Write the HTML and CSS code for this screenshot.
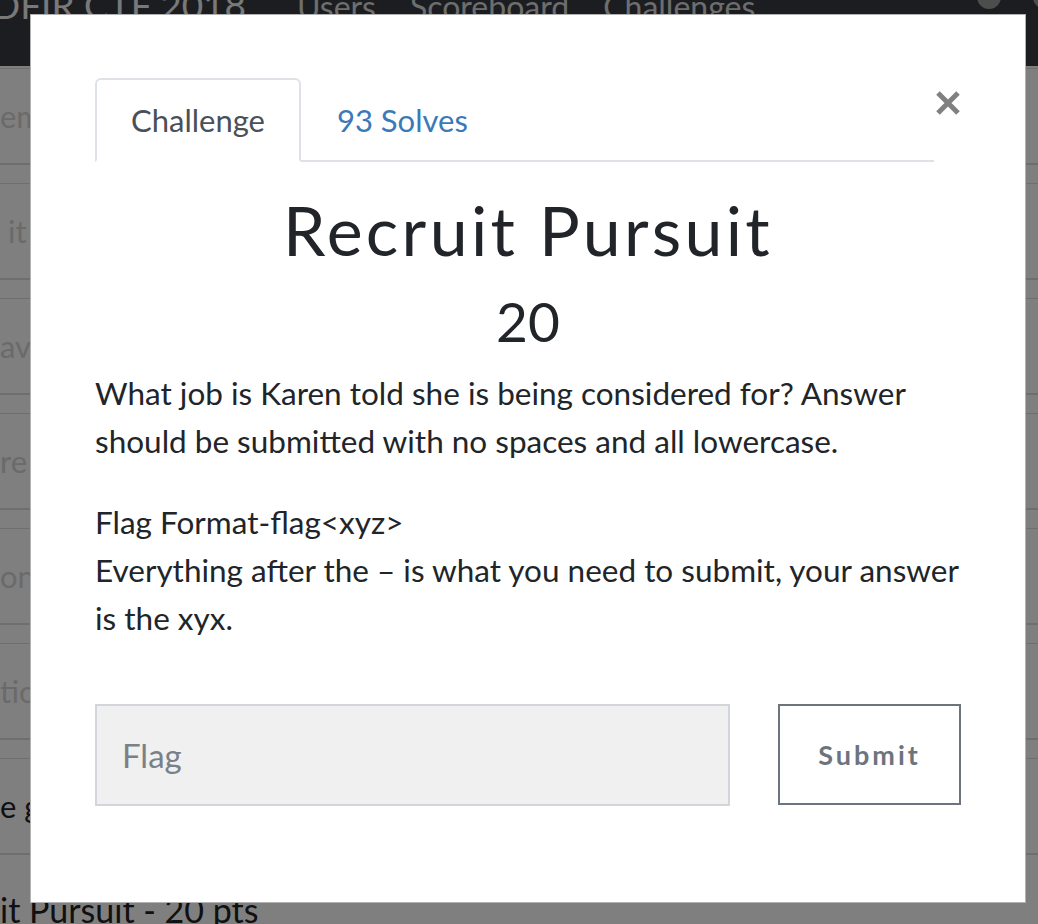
FILE: index.html
```html
<!DOCTYPE html>
<html lang="en">
<head>
<meta charset="utf-8">
<title>Recruit Pursuit</title>
<link rel="stylesheet" href="styles.css">
</head>
<body>
<div class="page">
  <nav class="navbar">
    <div class="nav-inner">
      <span class="brand">DFIR CTF 2018</span>
      <ul class="nav-links">
        <li>Users</li>
        <li>Scoreboard</li>
        <li>Challenges</li>
      </ul>
      <span class="nav-icons">
        <svg class="nav-icon" width="26" height="40" viewBox="0 0 26 40"><circle cx="13" cy="12" r="12" fill="#9a9a9a"/></svg>
        <svg class="nav-icon" width="26" height="40" viewBox="0 0 26 40"><circle cx="13" cy="12" r="12" fill="#9a9a9a"/></svg>
      </span>
    </div>
  </nav>
  <div class="rows">
    <div class="bg-row faded"><span>em shell forensic item</span></div>
    <div class="bg-row faded"><span>&nbsp;it was found on</span></div>
    <div class="bg-row faded"><span>av data recovered</span></div>
    <div class="bg-row faded"><span>re is the account</span></div>
    <div class="bg-row faded"><span>on the computer</span></div>
    <div class="bg-row faded"><span>tio n of the drive</span></div>
    <div class="bg-row dark"><span>e g eneral questions</span></div>
  </div>
  <h3 class="bottom-text">it Pursuit - 20 pts</h3>
</div>

<div class="overlay"></div>

<div class="modal">
  <div class="modal-head">
    <ul class="tabs">
      <li class="tab active">Challenge</li>
      <li class="tab link">93 Solves</li>
    </ul>
    <button class="close" aria-label="Close">
      <svg width="26" height="26" viewBox="0 0 26 26"><path d="M3 3 L23 23 M23 3 L3 23" stroke="#808080" stroke-width="5" fill="none"/></svg>
    </button>
  </div>
  <h2 class="title">Recruit Pursuit</h2>
  <h4 class="points">20</h4>
  <div class="desc">
    <p>What job is Karen told she is being considered for? Answer should be submitted with no spaces and all lowercase.</p>
    <p>Flag Format-flag&lt;xyz&gt;<br>Everything after the – is what you need to submit, your answer is the xyx.</p>
  </div>
  <div class="submit-row">
    <input class="flag-input" type="text" placeholder="Flag">
    <button class="submit-btn">Submit</button>
  </div>
</div>
</body>
</html>
```

FILE: styles.css
```css
html, body {
  margin: 0;
  padding: 0;
  height: 100%;
  overflow: hidden;
}

body {
  background: #ffffff;
  font-family: Lato, "Open Sans", "Liberation Sans", sans-serif;
  color: #212529;
}

.page {
  width: 100%;
}

.navbar {
  height: 66px;
  background: #383b41;
  overflow: hidden;
}

.nav-inner {
  display: flex;
  align-items: baseline;
  margin-top: -15px;
  margin-left: -8px;
  line-height: 40px;
}

.brand {
  font-size: 37px;
  color: #f2f2f2;
  margin-right: 34px;
  white-space: nowrap;
}

.nav-links {
  display: flex;
  list-style: none;
  margin: 0;
  padding: 0;
}

.nav-links li {
  font-size: 32px;
  color: #dcdcdc;
  padding: 0 17px;
}

.nav-icons {
  margin-left: auto;
  display: flex;
  gap: 30px;
  margin-right: -20px;
  align-self: flex-start;
  padding-top: 0;
}

.nav-icon {
  display: block;
}

.rows {
  padding-top: 2px;
}

.bg-row {
  height: 97px;
  box-sizing: border-box;
  border-top: 1px solid #dcdcdc;
  border-bottom: 2px solid #dcdcdc;
  margin-bottom: 18px;
  display: flex;
  align-items: center;
  font-size: 31px;
  white-space: nowrap;
  overflow: hidden;
}

.bg-row.faded {
  color: #d4d4d4;
}

.bg-row.dark {
  color: #222222;
}

.bottom-text {
  margin: 35px 0 0 0;
  font-size: 34px;
  font-weight: 400;
  color: #222222;
  line-height: 40px;
  white-space: nowrap;
}

.overlay {
  position: fixed;
  inset: 0;
  background: rgba(0, 0, 0, 0.5);
}

.modal {
  position: absolute;
  top: 14px;
  left: 30px;
  width: 996px;
  height: 889px;
  box-sizing: border-box;
  background: #ffffff;
  border: 1px solid rgba(0, 0, 0, 0.3);
  padding: 63px 64px 0 64px;
}

.modal-head {
  display: flex;
  align-items: flex-start;
}

.tabs {
  flex: 1;
  display: flex;
  list-style: none;
  margin: 0;
  padding: 0;
  border-bottom: 2px solid #dee2e6;
}

.tab {
  font-size: 31px;
  line-height: 48px;
  padding: 16px 34px;
  margin-bottom: -2px;
  border: 2px solid transparent;
  border-radius: 6px 6px 0 0;
}

.tab.active {
  color: #495057;
  border-color: #dee2e6 #dee2e6 #ffffff;
  background: #ffffff;
}

.tab.link {
  color: #3a79ba;
}

.close {
  width: 27px;
  height: 26px;
  margin-top: 12px;
  padding: 0;
  border: 0;
  background: transparent;
  display: flex;
  align-items: center;
  justify-content: center;
}

.close svg {
  display: block;
}

.title {
  margin: 27px 0 0;
  font-size: 68px;
  line-height: 1.2;
  font-weight: 400;
  letter-spacing: 3.3px;
  text-align: center;
  color: #212529;
}

.points {
  margin: 17px 0 0;
  font-size: 55px;
  line-height: 1.2;
  font-weight: 400;
  text-align: center;
  color: #212529;
}

.desc {
  margin-top: 15px;
  margin-right: -10px;
}

.desc p {
  margin: 0;
  font-size: 31.5px;
  line-height: 48px;
}

.desc p + p {
  margin-top: 33px;
}

.submit-row {
  margin-top: 62px;
  display: flex;
  justify-content: space-between;
  align-items: flex-start;
}

.flag-input {
  width: 635px;
  height: 102px;
  box-sizing: border-box;
  background: #f0f0f0;
  border: 2px solid #d2d6db;
  padding: 0 25px;
  font-family: Lato, "Liberation Sans", sans-serif;
  font-size: 33px;
  color: #495057;
  outline: none;
}

.flag-input::placeholder {
  color: #7a8087;
}

.submit-btn {
  width: 183px;
  height: 101px;
  box-sizing: border-box;
  background: #ffffff;
  border: 2px solid #6c757d;
  color: #6c757d;
  font-family: Lato, "Liberation Sans", sans-serif;
  font-weight: 700;
  font-size: 27px;
  letter-spacing: 3px;
  padding: 0;
}
```
